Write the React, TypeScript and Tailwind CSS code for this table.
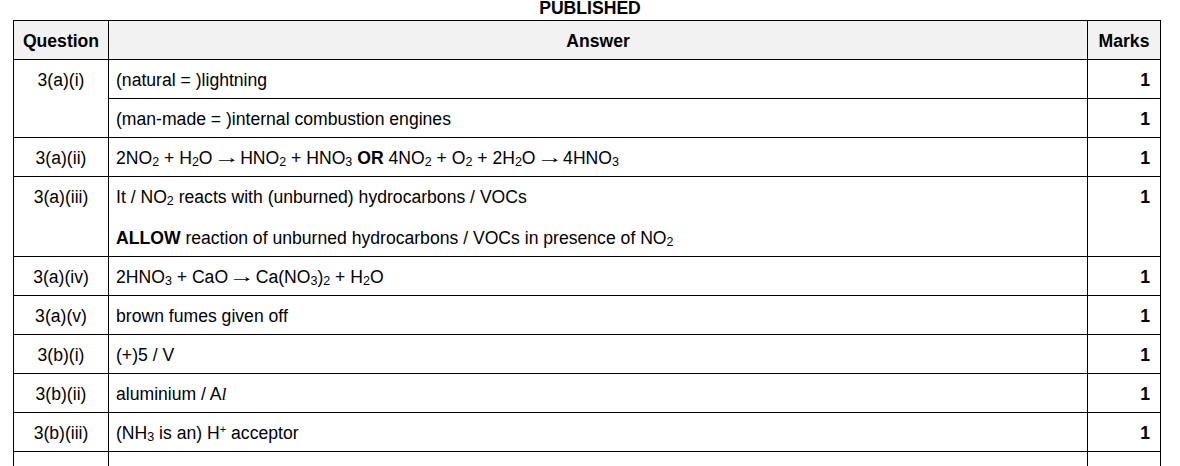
import React from "react";

const cell = "border border-black align-top px-[7px] pt-[10px] pb-0 leading-[20px]";

function Sub({ children }: { children: React.ReactNode }) {
  return <span className="text-[12.5px] align-[-2px] leading-none">{children}</span>;
}

function Sup({ children }: { children: React.ReactNode }) {
  return <span className="text-[11px] align-[6px] leading-none">{children}</span>;
}

function Arrow() {
  return <span className="inline-block scale-x-[1.5] mx-[5px] -translate-y-[1px]">→</span>;
}

type Row = { q?: string; span?: number; answer: React.ReactNode; marks?: string; tall?: boolean };

const rows: Row[] = [
  { q: "3(a)(i)", span: 2, answer: "(natural = )lightning", marks: "1" },
  { answer: "(man-made = )internal combustion engines", marks: "1" },
  {
    q: "3(a)(ii)",
    answer: (
      <>
        2NO<Sub>2</Sub> + H<Sub>2</Sub>O<Arrow />HNO<Sub>2</Sub> + HNO<Sub>3</Sub> <b>OR</b> 4NO<Sub>2</Sub> + O
        <Sub>2</Sub> + 2H<Sub>2</Sub>O<Arrow />4HNO<Sub>3</Sub>
      </>
    ),
    marks: "1",
  },
  {
    q: "3(a)(iii)",
    tall: true,
    answer: (
      <>
        <p>
          It / NO<Sub>2</Sub> reacts with (unburned) hydrocarbons / VOCs
        </p>
        <p className="mt-[20px]">
          <b>ALLOW</b> reaction of unburned hydrocarbons / VOCs in presence of NO<Sub>2</Sub>
        </p>
      </>
    ),
    marks: "1",
  },
  {
    q: "3(a)(iv)",
    answer: (
      <>
        2HNO<Sub>3</Sub> + CaO<Arrow />Ca(NO<Sub>3</Sub>)<Sub>2</Sub> + H<Sub>2</Sub>O
      </>
    ),
    marks: "1",
  },
  { q: "3(a)(v)", answer: "brown fumes given off", marks: "1" },
  { q: "3(b)(i)", answer: "(+)5 / V", marks: "1" },
  {
    q: "3(b)(ii)",
    answer: (
      <>
        aluminium / A<i className="font-['Liberation_Serif']">l</i>
      </>
    ),
    marks: "1",
  },
  {
    q: "3(b)(iii)",
    answer: (
      <>
        (NH<Sub>3</Sub> is an) H<Sup>+</Sup> acceptor
      </>
    ),
    marks: "1",
  },
  { q: "", answer: "", marks: "" },
];

export default function App() {
  return (
    <div className="w-[1180px] h-[466px] overflow-hidden bg-white text-black font-['Liberation_Sans',Arial,sans-serif] text-[17.6px]">
      <div className="h-[20px] flex justify-center">
        <span className="font-bold leading-[20px] -mt-[2px]">PUBLISHED</span>
      </div>
      <table className="ml-[13px] w-[1147px] border-collapse table-fixed">
        <colgroup>
          <col className="w-[95px]" />
          <col className="w-[979px]" />
          <col className="w-[73px]" />
        </colgroup>
        <thead>
          <tr className="bg-[#f2f2f2] h-[39px]">
            <th className={`${cell} text-center`}>Question</th>
            <th className={`${cell} text-center`}>Answer</th>
            <th className={`${cell} text-center`}>Marks</th>
          </tr>
        </thead>
        <tbody>
          {rows.map((r, i) => (
            <tr key={i} className={r.tall ? "h-[80px]" : "h-[39px]"}>
              {r.q !== undefined && (
                <td rowSpan={r.span} className={`${cell} text-center`}>
                  {r.q}
                </td>
              )}
              <td className={cell}>{r.answer}</td>
              <td className={`${cell} text-right font-bold pr-[10px]`}>{r.marks}</td>
            </tr>
          ))}
        </tbody>
      </table>
    </div>
  );
}
